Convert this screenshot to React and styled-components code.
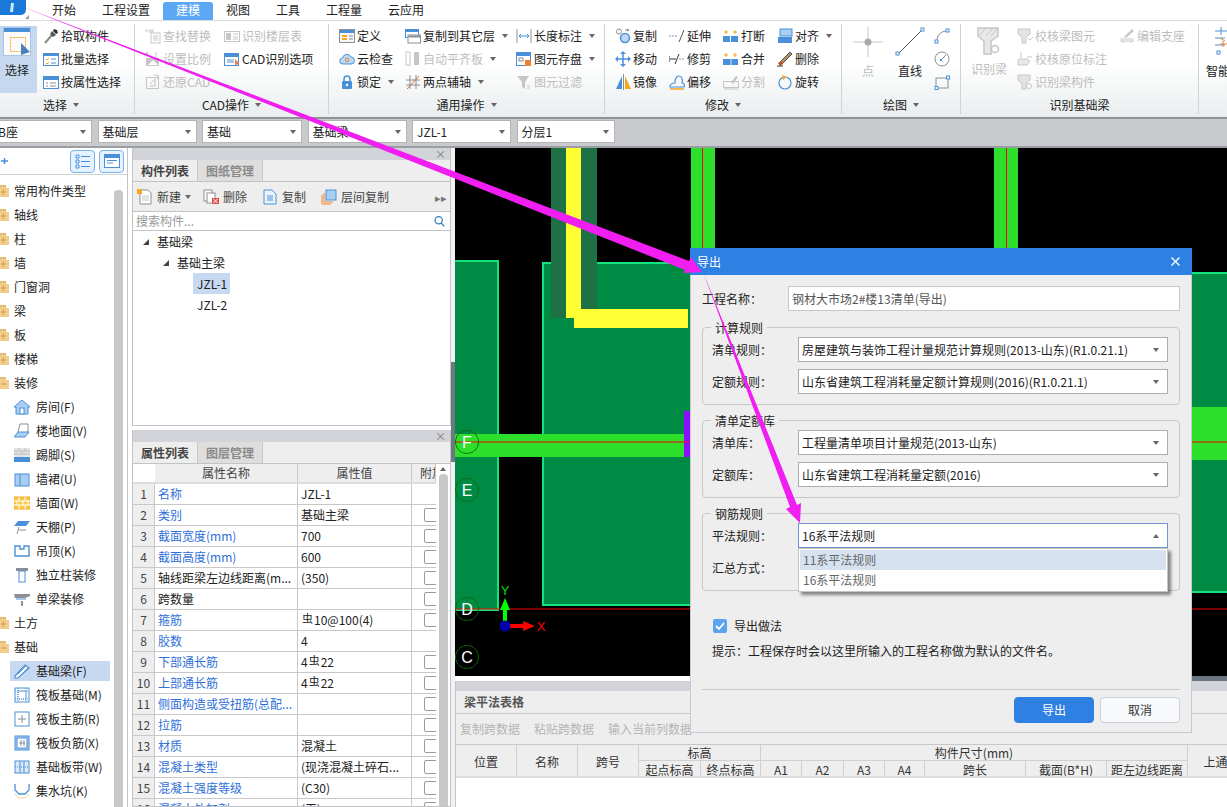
import React from "react";
import styled, { createGlobalStyle } from "styled-components";

const GlobalStyle = createGlobalStyle`
  html, body { margin: 0; padding: 0; background: #fff; }
  * { box-sizing: border-box; }
`;

const B = "#4a90d9";
const L = "#a9cdf3";
const O = "#f5a623";
const G = "#c6c6c6";
const D = "#8a8f96";

// all small drawings, 16 unit box
const glyphs = {
  pick: <><path d="M2 15l7-8" stroke="#8a8a8a" strokeWidth="2" /><path d="M9 3l4 4-3 2-3-3z" fill="#555" /><path d="M11 1l3 1 1 3-2 1-3-3z" fill="#333" /></>,
  batch: <><rect x=".5" y="2.5" width="15" height="12" fill="#fff" stroke={B} /><rect x="1" y="3" width="14" height="2" fill={B} /><path d="M3 8l1 1 2-2M3 12l1 1 2-2" stroke={O} fill="none" /><path d="M8 8h5M8 12h5" stroke={B} /></>,
  attrs: <><rect x=".5" y="2.5" width="15" height="12" fill="#fff" stroke={B} /><rect x="1" y="3" width="14" height="3" fill={B} /><path d="M3 9h2M3 12h2M7 9h6M7 12h6" stroke={D} /></>,
  find: <><path d="M1 2h8M1 2v3" stroke={G} strokeDasharray="2 1" fill="none" /><rect x="6" y="5" width="9" height="10" fill="none" stroke={G} /><path d="M8 8h5M8 10h5M8 12h5" stroke={G} /><path d="M3 4h5l-2-2" stroke={G} fill="none" /></>,
  scale: <><rect x="1" y="7" width="13" height="8" fill={G} /><path d="M2 4V1M2 1l-1 2M2 1l1 2M11 6V1" stroke={G} fill="none" /><path d="M3 14l5-5 5 5" fill="#fff" /></>,
  restore: <><rect x="1.5" y="3.5" width="12" height="11" fill="none" stroke={G} /><path d="M5 10l5-5v7H5" fill="none" stroke={G} /><path d="M9 1l5 1-2 3" stroke={G} fill="none" /></>,
  table: <><rect x=".5" y="3.5" width="15" height="10" fill="#fff" stroke={G} /><rect x="2" y="5" width="5" height="7" fill={G} /><path d="M9 6h5M9 9h5M9 11h5" stroke={G} /></>,
  cadOpt: <><rect x=".5" y="2.5" width="14" height="12" fill="#fff" stroke={B} /><rect x="1" y="3" width="13" height="3" fill={B} /><path d="M3 11h7M3 9h7" stroke={B} /><path d="M11 8l4 4-4 3z" fill="#f08040" /></>,
  define: <><rect x=".5" y="1.5" width="15" height="13" fill="#f7f7f7" stroke={D} /><rect x="1" y="2" width="14" height="3" fill={B} /><rect x="3" y="7" width="5" height="2" fill={O} /><rect x="3" y="10" width="5" height="2" fill={O} /><path d="M10 8h4M10 11h4" stroke={D} /></>,
  cloud: <><path d="M4 13a3 3 0 0 1-.5-6A4.500 4.500 0 0 1 12 6a3.500 3.500 0 0 1 0 7z" fill="#bcd8f5" stroke={B} /><circle cx="8" cy="9" r="1.800" fill="none" stroke="#e08040" /></>,
  lock: <><rect x="3" y="7" width="10" height="8" rx="1" fill={B} /><path d="M5 7V5a3 3 0 0 1 6 0v2" fill="none" stroke={B} strokeWidth="1.500" /><circle cx="8" cy="11" r="1.200" fill="#fff" /></>,
  copyLayer: <><rect x=".5" y="1.5" width="13" height="8" fill="#fff" stroke={B} /><rect x="1" y="2" width="12" height="2" fill={B} /><rect x="3" y="7" width="12.500" height="8" fill="#fff" stroke={D} /><rect x="3.500" y="7.500" width="12" height="2" fill={D} /></>,
  align0: <><rect x="1" y="1" width="4" height="13" fill="none" stroke={G} /><rect x="9" y="1" width="5" height="13" fill={G} /></>,
  twoPt: <><path d="M1 6h14M1 11h14M5 1v14M11 1v14" stroke={D} /><path d="M2 15L14 2" stroke="#e07030" /></>,
  dim: <><path d="M1 1v14M15 1v14" stroke={D} /><path d="M3 8h10M3 8l2-2M3 8l2 2M13 8l-2-2M13 8l-2 2" stroke={B} fill="none" /></>,
  save: <><rect x=".5" y="1.5" width="14" height="13" fill="#fff" stroke={B} /><rect x="1" y="2" width="13" height="3" fill={B} /><rect x="3" y="7" width="4" height="3" fill="none" stroke={D} /><rect x="9" y="9" width="6" height="6" fill="#f08030" /></>,
  filter: <><path d="M1 2h12L9 8v7l-3-2V8z" fill={G} /><path d="M11 12h3M11 14h3" stroke={G} /></>,
  copy: <><circle cx="4" cy="3.500" r="2.500" fill="none" stroke={D} /><circle cx="10" cy="10" r="4.500" fill="#bcd8f5" stroke={B} strokeWidth="1.500" /><path d="M10 2h4M12 1l2 1-2 1" stroke={D} fill="none" /></>,
  move: <><path d="M8 1v14M1 8h14" stroke={B} strokeWidth="1.500" /><path d="M8 0l3 3H5zM8 16l3-3H5zM0 8l3-3v6zM16 8l-3-3v6z" fill={B} /></>,
  mirror: <><path d="M7 2v13H1z" fill={B} /><path d="M10 2v13h6z" fill={O} /><path d="M8.500 0v16" stroke={D} /></>,
  extend: <><path d="M0 8h8" stroke={D} strokeDasharray="2 1" /><path d="M10 14l5-12" stroke="#555" /></>,
  trim: <><path d="M0 5v6" stroke="#333" /><path d="M1 8h6" stroke="#333" /><path d="M6 13l4-10" stroke="#333" /><path d="M10 8h6" stroke={D} strokeDasharray="2 1" /></>,
  offset: <><path d="M1 13c0-4 4-4 5-4 0-3 1-7 4-7s4 4 3 7c2 0 3 2 2 4z" fill="none" stroke={B} strokeWidth="1.200" /><path d="M1 15h14" stroke={O} strokeWidth="1.500" /></>,
  brk: <><rect x="0" y="8" width="7" height="6" fill={B} /><rect x="8" y="8" width="7" height="6" fill={B} /><path d="M1 4h4M3 2v4M10 4h4M12 2v4" stroke={O} /></>,
  merge: <><rect x="0" y="8" width="15" height="6" fill={B} /><path d="M8 8v6" stroke="#cfe3f8" /><path d="M1 4h4M3 2v4M10 4h4M12 2v4" stroke={O} /></>,
  split: <><rect x=".5" y="7.500" width="15" height="6" fill="none" stroke={G} /><path d="M8 8l5-6 2 1-5 7z" fill={G} /><path d="M1 15h14" stroke={G} /></>,
  alignR: <><rect x="3" y="1" width="12" height="7" fill={L} stroke={B} /><rect x="1" y="9" width="14" height="6" fill={B} /></>,
  del: <><path d="M3 11L13 1l2 2L5 13z" fill="#b09060" stroke="#555" /><path d="M1 12l3-2 2 3-3 2z" fill="#c0501a" /><path d="M0 15h6" stroke="#333" /></>,
  rotate: <><circle cx="8" cy="9" r="6" fill="none" stroke={B} strokeWidth="1.200" /><path d="M5 1l5 2-4 3z" fill={O} /></>,
  arc: <><path d="M3 13C3 7 7 3 13 3" stroke={D} fill="none" /><rect x="1" y="12" width="3" height="3" fill="#fff" stroke={B} /><rect x="12" y="1" width="3" height="3" fill="#fff" stroke={B} /></>,
  circle: <><circle cx="8" cy="8" r="7" fill="none" stroke={D} /><path d="M7 9l5-5" stroke={B} /><rect x="6" y="8" width="2" height="2" fill={B} /></>,
  rect: <><rect x="2" y="4" width="12" height="10" fill="none" stroke={D} /><rect x="1" y="12.500" width="3" height="3" fill="#fff" stroke={B} /><rect x="12.500" y="2" width="3" height="3" fill="#fff" stroke={B} /></>,
  checkBeam: <><path d="M1 1h12v5l-4 3v6H5V9L1 6z" fill="#e4e4e4" stroke={G} /><path d="M11 10l2 2 3-3" stroke={G} fill="none" /></>,
  checkPos: <><path d="M4 1v6M2 8h8l3 2-3 4H1V9z" fill="#e8e8e8" stroke={G} /><path d="M10 6h5" stroke={G} /></>,
  recog: <><path d="M1 1h12v5l-4 3v6H5V9L1 6z" fill="#e4e4e4" stroke={G} /><circle cx="12" cy="12" r="2.500" fill="#fff" stroke={G} /></>,
  support: <><path d="M5 9L13 1l2 2-8 7z" fill={G} /><path d="M1 11h14M1 13h14M4 13v2M12 13v2" stroke={G} /></>,
  folder: <><path d="M-3 3h9v2h3v9H-3z" fill="#f1cd8b" /><path d="M-3 2h9v2h-9z" fill="#e3ba75" /><path d="M1 9h5M3.500 6.500v5" stroke="#d19a3f" /></>,
  folderOpen: <><path d="M-3 3h9v2h3v9H-3z" fill="#f1cd8b" /><path d="M-3 2h9v2h-9z" fill="#e3ba75" /><path d="M1 9h5" stroke="#d19a3f" /></>,
  room: <><path d="M0 8l8-7 8 7h-2v7H2V8z" fill={L} stroke={B} /><rect x="6" y="9" width="4" height="6" fill="#fff" stroke={B} /></>,
  floor: <><path d="M6 1h8M6 1L4 9" stroke={D} fill="none" /><path d="M14 1v8" stroke={D} /><path d="M4 9h11l-4 5H0z" fill={L} stroke={B} /></>,
  skirt: <><rect x="0" y="1" width="16" height="9" fill="#e4e4e4" /><path d="M0 4h16M0 7h16M5 1v3M11 1v3M8 4v3" stroke="#bbb" /><rect x="0" y="10" width="16" height="5" fill={B} /></>,
  dado: <><rect x="1" y="3" width="14" height="12" fill={L} stroke={B} /><path d="M6 3v12" stroke={B} /></>,
  wall: <><rect x="0" y="2" width="16" height="12" fill="#fbc94a" stroke={O} /><path d="M0 6h16M0 10h16M5 2v4M11 2v4M3 6v4M9 6v4M14 6v4M5 10v4M11 10v4" stroke="#fff" /></>,
  ceiling: <><path d="M4 2h12l-4 5H0z" fill={B} /><path d="M5 8L3 15M5 11h7" stroke={D} fill="none" /></>,
  drop: <><path d="M1 3h5v3h4V3h5v10H1z" fill="#fff" stroke={B} strokeWidth="1.400" /></>,
  colDeco: <><rect x="2" y="1" width="12" height="3" fill={D} /><rect x="5" y="4" width="6" height="11" fill="#fff" stroke={B} /></>,
  beamDeco: <><path d="M0 3h16v2l-5 2H1z" fill={D} /><path d="M2 8h10" stroke={B} /><path d="M8 10v5" stroke={D} strokeWidth="2" /></>,
  pencil: <><path d="M1 13L11 2l4 3L4 15H1z" fill="#fff" stroke={B} strokeWidth="1.200" /><path d="M4 11l8-8M6 13l8-8" stroke={B} /></>,
  raft: <><rect x="1" y="1" width="14" height="14" fill="#fff" stroke={B} /><rect x="4" y="4" width="8" height="8" fill="#fff" stroke={B} strokeDasharray="1 1" /><path d="M1 4h14M1 12h14M4 1v14M12 1v14" stroke={B} strokeDasharray="1 1" /></>,
  raftM: <><rect x="1" y="1" width="14" height="14" fill="#fff" stroke={B} /><path d="M4 8h8M8 4v8" stroke={D} /></>,
  raftN: <><rect x="1" y="1" width="14" height="14" fill={L} stroke={B} /><rect x="3" y="3" width="10" height="10" fill="#fff" stroke={B} /><path d="M5 8h6M7 5v6M10 5v6" stroke={D} /></>,
  band: <><rect x="1" y="2" width="14" height="12" fill="#dce9f7" stroke={B} /><path d="M6 2v12M10 2v12" stroke={B} /><path d="M1 8h14" stroke={B} strokeDasharray="1 1" /></>,
  pit: <><path d="M1 1v6l4 4h6l4-4V1" fill="none" stroke={B} strokeWidth="1.300" /><path d="M1 11l4 4h6l4-4" fill="none" stroke={O} strokeDasharray="1 1" /></>,
  newDoc: <><path d="M3 1h8l3 3v11H3z" fill="#fff" stroke={D} /><path d="M5 7h7M5 9h7M5 11h7" stroke={G} /><rect x="0" y="0" width="5" height="5" fill={O} /></>,
  delDoc: <><rect x="1" y="1" width="8" height="11" fill="#fff" stroke={D} /><rect x="4" y="4" width="8" height="10" fill="#fff" stroke={D} /><rect x="9" y="9" width="7" height="6" fill="#e0504a" /><path d="M10.500 10l4 4M14.500 10l-4 4" stroke="#fff" /></>,
  copyDoc: <><path d="M2 1h8l4 4v10H2z" fill="#eaf3fc" stroke={B} /><path d="M5 7h6M5 9h6M5 11h6" stroke={B} /></>,
  layerCopy: <><rect x="5" y="1" width="10" height="10" fill={L} stroke={B} /><path d="M3 4v9h9" fill="none" stroke="#f08030" /><path d="M1 6v9h9" fill="none" stroke="#f08030" /></>,
  search: <><circle cx="7" cy="6.500" r="4.500" fill="none" stroke="#2b80c0" strokeWidth="1.500" /><path d="M10 10l4 4" stroke="#2b80c0" strokeWidth="1.700" /></>,
  list: <><path d="M1 2h3v3H1zM1 7h3v3H1zM1 12h3v3H1z" fill="none" stroke={B} /><path d="M6 3.500h9M6 8.500h9M6 13.500h9" stroke={B} /></>,
  win: <><rect x=".5" y="1.500" width="15" height="13" fill="#fff" stroke={B} /><rect x="1" y="2" width="14" height="3" fill={B} /><path d="M3 7.500h10M3 10h6" stroke={B} /></>,
};

const SvgBox = styled.svg`
  display: block;
  flex-shrink: 0;
  overflow: hidden;
`;

const Icon = ({ name, size = 16 }) => (
  <SvgBox width={size} height={size} viewBox="0 0 16 16">{glyphs[name]}</SvgBox>
);

const Page = styled.div`
  position: relative;
  width: 1227px;
  height: 807px;
  overflow: hidden;
  display: flex;
  flex-direction: column;
  background: #fff;
  color: #222;
  font-family: "Noto Sans CJK SC", "Liberation Sans", sans-serif;
  font-size: 12px;
  line-height: 16px;
`;

const MenuBar = styled.div`
  height: 21px;
  flex-shrink: 0;
  display: flex;
  align-items: flex-end;
  border-bottom: 1px solid #dcdcdc;
`;

const Logo = styled.div`
  width: 39px;
  height: 20px;
  align-self: flex-start;
`;

const MenuTab = styled.div`
  height: 18px;
  padding: 0 13px;
  border-radius: 3px 3px 0 0;
  background: ${(p) => (p.$active ? "#5ca8f5" : "transparent")};
  color: ${(p) => (p.$active ? "#fff" : "#222")};
`;

const Ribbon = styled.div`
  height: 98px;
  flex-shrink: 0;
  display: flex;
  padding-top: 3px;
  background: linear-gradient(#fff 45%, #e9edee);
  border-bottom: 2px solid #8f9295;
`;

const RibbonGroup = styled.div`
  width: ${(p) => p.$w}px;
  flex-shrink: 0;
  height: 90px;
  display: flex;
  flex-direction: column;
  border-right: ${(p) => (p.$last ? "none" : "1px solid #cfd3d5")};
`;

const GroupBody = styled.div`
  height: 72px;
  display: flex;
  padding-left: ${(p) => p.$pad || 0}px;
`;

const GroupLabel = styled.div`
  flex: 1;
  display: flex;
  align-items: center;
  justify-content: center;
  gap: 6px;
  padding-right: ${(p) => p.$shift || 0}px;
`;

const Caret = styled.span`
  display: inline-block;
  flex-shrink: 0;
  width: 0;
  height: 0;
  border-left: 3.5px solid transparent;
  border-right: 3.5px solid transparent;
  ${(p) => (p.$up ? "border-bottom: 4px solid #666;" : "border-top: 4px solid #666;")}
`;

const ToolCol = styled.div`
  width: ${(p) => p.$w}px;
  flex-shrink: 0;
  display: flex;
  flex-direction: column;
`;

const ToolRow = styled.div`
  height: 23px;
  display: flex;
  align-items: center;
  gap: 2px;
  white-space: nowrap;
  color: ${(p) => (p.$off ? "#bdbdbd" : "#222")};
`;

const RowCaret = styled(Caret)`
  margin-left: 5px;
`;

const BigTool = styled.div`
  width: ${(p) => p.$w}px;
  height: 67px;
  margin-top: 2px;
  margin-right: ${(p) => p.$gap || 0}px;
  flex-shrink: 0;
  display: flex;
  flex-direction: column;
  align-items: center;
  gap: 6px;
  padding: 1px ${(p) => p.$nudge || 0}px 0 0;
  white-space: nowrap;
  background: ${(p) => (p.$on ? "#c5d8ef" : "transparent")};
  color: ${(p) => (p.$off ? "#bdbdbd" : "#222")};
`;

const SelectorBar = styled.div`
  height: 29px;
  flex-shrink: 0;
  display: flex;
  align-items: center;
  gap: 5.500px;
  padding-bottom: 2px;
  background: #c8cace;
  border-bottom: 2px solid #9a9da1;
`;

const SmallSelect = styled.div`
  width: ${(p) => p.$w}px;
  height: 23px;
  flex-shrink: 0;
  display: flex;
  align-items: center;
  justify-content: space-between;
  padding: 0 5px 0 ${(p) => (p.$cut ? 0 : 4)}px;
  margin-left: ${(p) => (p.$cut ? -3 : 0)}px;
  background: #fff;
  border: 1px solid #b4b4b4;
  overflow: hidden;
  white-space: nowrap;
`;

const Main = styled.div`
  flex: 1;
  min-height: 0;
  display: flex;
`;

const LeftNav = styled.div`
  width: 128px;
  flex-shrink: 0;
  display: flex;
  flex-direction: column;
  border-right: 1px solid #c4c4c4;
`;

const NavTop = styled.div`
  height: 27px;
  flex-shrink: 0;
  display: flex;
  align-items: center;
  justify-content: space-between;
  padding-right: 3px;
  border-bottom: 1px solid #d0d0d0;
`;

const NavToggles = styled.div`
  display: flex;
  gap: 4px;
`;

const ToggleBtn = styled.div`
  width: 25px;
  height: 23px;
  display: flex;
  align-items: center;
  justify-content: center;
  background: #e6f2fe;
  border: 1px solid #74b2f2;
  border-radius: 4px;
`;

const NavBody = styled.div`
  flex: 1;
  min-height: 0;
  display: flex;
`;

const NavTree = styled.div`
  width: 114px;
  flex-shrink: 0;
  padding-top: 4px;
  display: flex;
  flex-direction: column;
`;

const NavScroll = styled.div`
  width: 9px;
  margin-top: 15px;
  background: #c8c8c8;
  border-radius: 4px 4px 0 0;
`;

const NavRow = styled.div`
  height: 24px;
  flex-shrink: 0;
  display: flex;
  align-items: center;
  gap: 4px;
  white-space: nowrap;
`;

const NavChild = styled.div`
  width: 100px;
  height: 20px;
  flex-shrink: 0;
  margin: 2px 0 2px 10px;
  padding-left: 4px;
  display: flex;
  align-items: center;
  gap: 6px;
  white-space: nowrap;
  background: ${(p) => (p.$on ? "#c7d9f0" : "transparent")};
`;

const MidCol = styled.div`
  width: 323px;
  flex-shrink: 0;
  margin-left: 4px;
  display: flex;
  flex-direction: column;
  gap: 4px;
  border-right: 4px solid #f2f2f2;
`;

const Panel = styled.div`
  height: ${(p) => (p.$h ? `${p.$h}px` : "auto")};
  flex: ${(p) => (p.$h ? "none" : "1")};
  min-height: 0;
  display: flex;
  flex-direction: column;
  overflow: hidden;
  border: 1px solid #c0c3c7;
  border-top: none;
`;

const PanelStrip = styled.div`
  height: 12px;
  flex-shrink: 0;
  display: flex;
  align-items: center;
  justify-content: flex-end;
  padding-right: 4px;
  background: #d2d4d9;
  color: #777;
  font-size: 11px;
  line-height: 12px;
`;

const BottomStrip = styled(PanelStrip)`
  height: 10px;
`;

const TabRow = styled.div`
  height: 22px;
  flex-shrink: 0;
  display: flex;
  background: #eee;
  border-bottom: 1px solid #c0c3c7;
`;

const PanelTab = styled.div`
  width: 65px;
  display: flex;
  align-items: center;
  justify-content: center;
  font-weight: 700;
  background: ${(p) => (p.$active ? "#eee" : "#dedede")};
  color: ${(p) => (p.$active ? "#444" : "#8a8a8a")};
  border-right: 1px solid #c8c8c8;
`;

const ListBar = styled.div`
  height: 30px;
  flex-shrink: 0;
  display: flex;
  align-items: center;
  padding-left: 4px;
  background: #eee;
  border-bottom: 1px solid #c0c3c7;
  color: #444;
`;

const ListTool = styled.div`
  display: flex;
  align-items: center;
  gap: 4px;
  margin-right: ${(p) => p.$gap}px;
`;

const ListMore = styled.div`
  margin-left: auto;
  padding-right: 3px;
  color: #777;
  font-size: 11px;
`;

const SearchBox = styled.div`
  height: 19px;
  flex-shrink: 0;
  display: flex;
  align-items: center;
  justify-content: space-between;
  padding: 0 4px 0 3px;
  color: #999;
  border-bottom: 1px solid #c0c3c7;
`;

const TreeWrap = styled.div`
  padding-top: 0;
`;

const TreeRow = styled.div`
  height: 21px;
  display: flex;
  align-items: center;
  gap: 8px;
  padding-left: ${(p) => p.$indent}px;
`;

const TreeMark = styled.span`
  width: 0;
  height: 0;
  border-left: 6px solid transparent;
  border-bottom: 6px solid #444;
`;

const TreeLeaf = styled.div`
  width: 37px;
  height: 21px;
  margin-left: 60px;
  padding-left: 4px;
  display: flex;
  align-items: center;
  background: ${(p) => (p.$on ? "#c7d9f0" : "transparent")};
`;

const PropWrap = styled.div`
  flex: 1;
  min-height: 0;
  display: flex;
`;

const PropTable = styled.div`
  width: 303px;
  flex-shrink: 0;
  overflow: hidden;
`;

const PropRow = styled.div`
  height: 21px;
  display: grid;
  grid-template-columns: 22px 143px 114px 24px;
  border-bottom: 1px solid #c8c8c8;
`;

const PropHead = styled(PropRow)`
  height: 20px;
  color: #444;
  border-bottom: 2px solid #ddd;
`;

const HeadCell = styled.div`
  display: flex;
  align-items: center;
  justify-content: ${(p) => (p.$clip ? "flex-start" : "center")};
  padding-left: ${(p) => (p.$clip ? 8 : 0)}px;
  background: ${(p) => (p.$blank ? "#fff" : "#eee")};
  border-right: ${(p) => (p.$blank ? "none" : "1px solid #c8c8c8")};
  white-space: nowrap;
  overflow: hidden;
`;

const IndexCell = styled.div`
  display: flex;
  align-items: center;
  justify-content: center;
  background: #eee;
  color: #444;
  border-right: 1px solid #c8c8c8;
`;

const PropCell = styled.div`
  display: flex;
  align-items: center;
  padding-left: 3px;
  white-space: nowrap;
  overflow: hidden;
  color: ${(p) => (p.$link ? "#2f6fd8" : "#222")};
  border-right: 1px solid #c8c8c8;
`;

const CheckCell = styled.div`
  display: flex;
  align-items: center;
  padding-left: 12px;
  overflow: hidden;
`;

const TinyCheck = styled.span`
  width: 14px;
  height: 14px;
  flex-shrink: 0;
  border: 1px solid #9a9a9a;
  border-radius: 2px;
  background: #fff;
`;

const RebarMark = styled.span`
  font-size: 11px;
  margin: -5px 1px 0;
`;

const PropScroll = styled.div`
  width: 10px;
  margin-left: 2px;
  display: flex;
  flex-direction: column;
  align-items: center;
  gap: 3px;
  padding-top: 3px;
`;

const ScrollThumb = styled.div`
  flex: 1;
  width: 9px;
  background: #c8c8c8;
  border-radius: 4px 4px 0 0;
`;

const RightCol = styled.div`
  flex: 1;
  min-width: 0;
  display: flex;
  flex-direction: column;
`;

const Grip = styled.div`
  position: absolute;
  left: 451px;
  top: 362px;
  width: 4px;
  height: 100px;
  background: #6f7781;
`;

const Canvas = styled.svg`
  display: block;
  width: 772px;
  height: 528px;
  flex-shrink: 0;
  background: #000;
`;

const HSplit = styled.div`
  height: 5px;
  flex-shrink: 0;
  background: linear-gradient(to right, #fff 60%, #6a7580 60%);
`;

const BottomPanel = styled.div`
  flex: 1;
  min-height: 0;
  display: flex;
  flex-direction: column;
  border-left: 1px solid #c0c3c7;
  overflow: hidden;
`;

const BottomTab = styled.div`
  height: 23px;
  flex-shrink: 0;
  display: flex;
  align-items: center;
  padding-left: 8px;
  background: #eee;
  color: #555;
  font-weight: 700;
  border-bottom: 1px solid #c8c8c8;
`;

const BottomBar = styled.div`
  height: 31px;
  flex-shrink: 0;
  display: flex;
  align-items: center;
  gap: 14px;
  padding-left: 4px;
  background: #eee;
  color: #b5b5b5;
  border-bottom: 1px solid #c8c8c8;
  white-space: nowrap;
`;

const SpanGrid = styled.div`
  display: grid;
  height: 33px;
  flex-shrink: 0;
  grid-template-columns: 61px 61px 61px 62px 60px 41px 42px 41px 40px 101px 81px 81px 80px;
  grid-template-rows: 16px 17px;
  background: #eee;
  border-bottom: 2px solid #ddd;
  color: #333;
  overflow: hidden;
`;

const SpanCell = styled.div`
  grid-column: ${(p) => p.$col || "auto"};
  grid-row: ${(p) => p.$row || "auto"};
  display: flex;
  align-items: center;
  justify-content: center;
  white-space: nowrap;
  border-right: 1px solid #d0d0d0;
  border-bottom: ${(p) => (p.$under ? "1px solid #d0d0d0" : "none")};
`;

const Dialog = styled.div`
  position: absolute;
  left: 690px;
  top: 248px;
  width: 502px;
  height: 485px;
  background: #eee;
  border: 1px solid #c4cad6;
  border-top: none;
`;

const DialogTitle = styled.div`
  height: 27px;
  margin: 0 -1px;
  padding: 0 12px 0 7px;
  display: flex;
  align-items: center;
  justify-content: space-between;
  background: #2f80e3;
  color: #fff;
`;

const DialogBody = styled.div`
  padding: 11px 11px 0 11px;
  display: flex;
  flex-direction: column;
`;

const NameRow = styled.div`
  display: flex;
  align-items: center;
  margin-bottom: 16px;
`;

const NameLabel = styled.div`
  width: 86px;
`;

const NameInput = styled.div`
  flex: 1;
  height: 25px;
  display: flex;
  align-items: center;
  padding-left: 3px;
  background: #fff;
  border: 1px solid #c8c8c8;
  color: #555;
`;

const RuleGroup = styled.div`
  position: relative;
  height: ${(p) => p.$h}px;
  margin-bottom: 15px;
  padding: 9px 11px 0 9px;
  display: flex;
  flex-direction: column;
  gap: 7px;
  border: 1px solid #c8c8c8;
  border-radius: 4px;
`;

const Legend = styled.div`
  position: absolute;
  left: 8px;
  top: -8px;
  padding: 0 4px;
  background: #eee;
`;

const FieldRow = styled.div`
  display: flex;
  align-items: center;
`;

const FieldLabel = styled.div`
  width: 86px;
  flex-shrink: 0;
`;

const SelectBox = styled.div`
  position: relative;
  flex: 1;
  height: 25px;
  display: flex;
  align-items: center;
  justify-content: space-between;
  padding: 0 8px 0 3px;
  background: #fff;
  border: 1px solid ${(p) => (p.$open ? "#6f94d0" : "#adadad")};
  white-space: nowrap;
`;

const DropList = styled.div`
  position: absolute;
  z-index: 2;
  left: -1px;
  right: -1px;
  top: 24px;
  height: 44px;
  padding: 1px;
  background: #fff;
  border: 1px solid #c4c4c4;
  box-shadow: 3px 3px 3px rgba(0, 0, 0, 0.45);
`;

const DropItem = styled.div`
  height: 20px;
  padding-left: 3px;
  display: flex;
  align-items: center;
  color: #666;
  background: ${(p) => (p.$on ? "#d7e2f1" : "#fff")};
`;

const CheckRow = styled.div`
  display: flex;
  align-items: center;
  gap: 7px;
  margin: 12px 0 0 11px;
`;

const BlueCheck = styled.div`
  width: 14px;
  height: 14px;
  display: flex;
  align-items: center;
  justify-content: center;
  background: #5aa5f0;
  border-radius: 2px;
`;

const Hint = styled.div`
  margin: 9px 0 0 10px;
`;

const Rule = styled.div`
  height: 1px;
  margin-top: 30px;
  background: #c6cad2;
`;

const ButtonRow = styled.div`
  display: flex;
  justify-content: flex-end;
  gap: 6px;
  margin-top: 7px;
`;

const DialogButton = styled.div`
  width: 80px;
  height: 26px;
  display: flex;
  align-items: center;
  justify-content: center;
  border-radius: 4px;
  background: ${(p) => (p.$primary ? "#2f80e3" : "#f8f9fb")};
  color: ${(p) => (p.$primary ? "#fff" : "#333")};
  border: 1px solid ${(p) => (p.$primary ? "#2f80e3" : "#ccd2dc")};
`;

const ArrowLayer = styled.svg`
  position: absolute;
  left: 0;
  top: 0;
  z-index: 3;
  pointer-events: none;
`;

const menus = ["开始", "工程设置", "建模", "视图", "工具", "工程量", "云应用"];

const Tool = ({ icon, label, off, caret }) => (
  <ToolRow $off={off}>
    <Icon name={icon} />
    {label}
    {caret && <RowCaret />}
  </ToolRow>
);

const Column = ({ w, items }) => (
  <ToolCol $w={w}>
    {items.map((t) => <Tool key={t.label} {...t} />)}
  </ToolCol>
);

const SelectIcon = () => (
  <SvgBox width="28" height="29" viewBox="0 0 28 29">
    <rect x=".5" y=".5" width="27" height="28" fill="#fbfbfb" stroke="#a9c4e4" />
    <rect x="1" y="1" width="26" height="4" fill={B} />
    <rect x="7.500" y="10.500" width="15" height="14" fill="none" stroke={O} strokeDasharray="2 1" />
    <path d="M18 16l9 9-9 3z" fill="#4a80bd" />
  </SvgBox>
);

const PointIcon = () => (
  <SvgBox width="30" height="30" viewBox="0 0 30 30">
    <path d="M0 15h30M15 0v30" stroke={G} />
    <circle cx="15" cy="15" r="3.500" fill="#aaa" />
  </SvgBox>
);

const LineIcon = () => (
  <SvgBox width="30" height="30" viewBox="0 0 30 30">
    <path d="M3 27L27 3" stroke="#555" />
    <rect x="1" y="25" width="3" height="3" fill="#fff" stroke={B} />
    <rect x="26" y="1" width="3" height="3" fill="#fff" stroke={B} />
  </SvgBox>
);

const RecogIcon = () => (
  <SvgBox width="24" height="28" viewBox="0 0 24 28">
    <path d="M1 1h20v8l-7 5v13H7V14L1 9z" fill="#e8e8e8" stroke={G} strokeWidth="1.500" />
    <path d="M3 8l6-7M9 9l7-8M14 9l6-7" stroke={G} />
    <circle cx="18" cy="22" r="3.500" fill="#fff" stroke={G} strokeWidth="1.500" />
  </SvgBox>
);

const SmartIcon = () => (
  <SvgBox width="18" height="30" viewBox="-6 0 18 30">
    <path d="M0 4h12M6 0v8" stroke={B} />
    <path d="M0 11h10M0 18h10" stroke={B} />
    <path d="M5 11l5 3M5 17h7M8 14v6" stroke="#f08030" />
    <rect x="2" y="24" width="3" height="3" fill="#fff" stroke={B} />
  </SvgBox>
);

const RibbonArea = () => (
  <Ribbon>
    <RibbonGroup $w={135}>
      <GroupBody>
        <BigTool $w={37} $on $gap={6} $nudge={3}><SelectIcon />选择</BigTool>
        <Column w={90} items={[
          { icon: "pick", label: "拾取构件" },
          { icon: "batch", label: "批量选择" },
          { icon: "attrs", label: "按属性选择" },
        ]} />
      </GroupBody>
      <GroupLabel $shift={12}>选择<Caret /></GroupLabel>
    </RibbonGroup>
    <RibbonGroup $w={194}>
      <GroupBody $pad={10}>
        <Column w={79} items={[
          { icon: "find", label: "查找替换", off: true },
          { icon: "scale", label: "设置比例", off: true },
          { icon: "restore", label: "还原CAD", off: true },
        ]} />
        <Column w={95} items={[
          { icon: "table", label: "识别楼层表", off: true },
          { icon: "cadOpt", label: "CAD识别选项" },
        ]} />
      </GroupBody>
      <GroupLabel>CAD操作<Caret /></GroupLabel>
    </RibbonGroup>
    <RibbonGroup $w={276}>
      <GroupBody $pad={10}>
        <Column w={66} items={[
          { icon: "define", label: "定义" },
          { icon: "cloud", label: "云检查" },
          { icon: "lock", label: "锁定", caret: true },
        ]} />
        <Column w={111} items={[
          { icon: "copyLayer", label: "复制到其它层", caret: true },
          { icon: "align0", label: "自动平齐板", off: true, caret: true },
          { icon: "twoPt", label: "两点辅轴", caret: true },
        ]} />
        <Column w={80} items={[
          { icon: "dim", label: "长度标注", caret: true },
          { icon: "save", label: "图元存盘", caret: true },
          { icon: "filter", label: "图元过滤", off: true },
        ]} />
      </GroupBody>
      <GroupLabel>通用操作<Caret /></GroupLabel>
    </RibbonGroup>
    <RibbonGroup $w={237}>
      <GroupBody $pad={10}>
        <Column w={54} items={[
          { icon: "copy", label: "复制" },
          { icon: "move", label: "移动" },
          { icon: "mirror", label: "镜像" },
        ]} />
        <Column w={54} items={[
          { icon: "extend", label: "延伸" },
          { icon: "trim", label: "修剪" },
          { icon: "offset", label: "偏移" },
        ]} />
        <Column w={54} items={[
          { icon: "brk", label: "打断" },
          { icon: "merge", label: "合并" },
          { icon: "split", label: "分割", off: true },
        ]} />
        <Column w={54} items={[
          { icon: "alignR", label: "对齐", caret: true },
          { icon: "del", label: "删除" },
          { icon: "rotate", label: "旋转" },
        ]} />
      </GroupBody>
      <GroupLabel>修改<Caret /></GroupLabel>
    </RibbonGroup>
    <RibbonGroup $w={119}>
      <GroupBody $pad={11}>
        <BigTool $w={30} $gap={12} $off><PointIcon />点</BigTool>
        <BigTool $w={30} $gap={9}><LineIcon />直线</BigTool>
        <Column w={16} items={[
          { icon: "arc", label: "" },
          { icon: "circle", label: " " },
          { icon: "rect", label: "  " },
        ]} />
      </GroupBody>
      <GroupLabel>绘图<Caret /></GroupLabel>
    </RibbonGroup>
    <RibbonGroup $w={238}>
      <GroupBody $pad={10}>
        <BigTool $w={36} $gap={10} $off><RecogIcon />识别梁</BigTool>
        <Column w={102} items={[
          { icon: "checkBeam", label: "校核梁图元", off: true },
          { icon: "checkPos", label: "校核原位标注", off: true },
          { icon: "recog", label: "识别梁构件", off: true },
        ]} />
        <Column w={70} items={[{ icon: "support", label: "编辑支座", off: true }]} />
      </GroupBody>
      <GroupLabel>识别基础梁</GroupLabel>
    </RibbonGroup>
    <RibbonGroup $w={28} $last>
      <GroupBody $pad={7}>
        <BigTool $w={24}>
          <SmartIcon />
          智能
        </BigTool>
      </GroupBody>
    </RibbonGroup>
  </Ribbon>
);

const navItems = [
  { t: "常用构件类型", f: 1 }, { t: "轴线", f: 1 }, { t: "柱", f: 1 }, { t: "墙", f: 1 },
  { t: "门窗洞", f: 1 }, { t: "梁", f: 1 }, { t: "板", f: 1 }, { t: "楼梯", f: 1 },
  { t: "装修", f: 2 },
  { t: "房间(F)", i: "room" }, { t: "楼地面(V)", i: "floor" }, { t: "踢脚(S)", i: "skirt" },
  { t: "墙裙(U)", i: "dado" }, { t: "墙面(W)", i: "wall" }, { t: "天棚(P)", i: "ceiling" },
  { t: "吊顶(K)", i: "drop" }, { t: "独立柱装修", i: "colDeco" }, { t: "单梁装修", i: "beamDeco" },
  { t: "土方", f: 1 },
  { t: "基础", f: 2 },
  { t: "基础梁(F)", i: "pencil", on: true }, { t: "筏板基础(M)", i: "raft" }, { t: "筏板主筋(R)", i: "raftM" },
  { t: "筏板负筋(X)", i: "raftN" }, { t: "基础板带(W)", i: "band" }, { t: "集水坑(K)", i: "pit" },
];

const LeftPanel = () => (
  <LeftNav>
    <NavTop>
      <SvgBox width="9" height="10" viewBox="0 0 9 10">
        <path d="M1 5h7M4.500 2v6" stroke={B} strokeWidth="1.500" />
      </SvgBox>
      <NavToggles>
        <ToggleBtn><Icon name="list" /></ToggleBtn>
        <ToggleBtn><Icon name="win" /></ToggleBtn>
      </NavToggles>
    </NavTop>
    <NavBody>
      <NavTree>
        {navItems.map((n) => n.f ? (
          <NavRow key={n.t}>
            <SvgBox width="10" height="16" viewBox="0 0 10 16">{n.f === 1 ? glyphs.folder : glyphs.folderOpen}</SvgBox>
            {n.t}
          </NavRow>
        ) : (
          <NavChild key={n.t} $on={n.on}><Icon name={n.i} />{n.t}</NavChild>
        ))}
      </NavTree>
      <NavScroll />
    </NavBody>
  </LeftNav>
);

const Rebar = () => <RebarMark>虫</RebarMark>;

const props = [
  ["名称", "JZL-1", 1, 0],
  ["类别", "基础主梁", 1, 1],
  ["截面宽度(mm)", "700", 1, 1],
  ["截面高度(mm)", "600", 1, 1],
  ["轴线距梁左边线距离(m...", "(350)", 0, 1],
  ["跨数量", "", 0, 1],
  ["箍筋", <><Rebar />10@100(4)</>, 1, 1],
  ["胶数", "4", 1, 0],
  ["下部通长筋", <>4<Rebar />22</>, 1, 1],
  ["上部通长筋", <>4<Rebar />22</>, 1, 1],
  ["侧面构造或受扭筋(总配...", "", 1, 1],
  ["拉筋", "", 1, 1],
  ["材质", "混凝土", 1, 1],
  ["混凝土类型", "(现浇混凝土碎石...", 1, 1],
  ["混凝土强度等级", "(C30)", 1, 1],
  ["混凝土外加剂", "(无)", 1, 1],
];

const MiddlePanels = () => (
  <MidCol>
    <Panel $h={278}>
      <PanelStrip>×</PanelStrip>
      <TabRow>
        <PanelTab $active>构件列表</PanelTab>
        <PanelTab>图纸管理</PanelTab>
      </TabRow>
      <ListBar>
        <ListTool $gap={12}>
          <Icon name="newDoc" />
          新建 <Caret />
        </ListTool>
        <ListTool $gap={15}><Icon name="delDoc" />删除</ListTool>
        <ListTool $gap={15}><Icon name="copyDoc" />复制</ListTool>
        <ListTool $gap={0}><Icon name="layerCopy" />层间复制</ListTool>
        <ListMore>▸▸</ListMore>
      </ListBar>
      <SearchBox>搜索构件...<Icon name="search" size={13} /></SearchBox>
      <TreeWrap>
        <TreeRow $indent={10}><TreeMark />基础梁</TreeRow>
        <TreeRow $indent={30}><TreeMark />基础主梁</TreeRow>
        <TreeLeaf $on>JZL-1</TreeLeaf>
        <TreeLeaf>JZL-2</TreeLeaf>
      </TreeWrap>
    </Panel>
    <Panel>
      <PanelStrip>×</PanelStrip>
      <TabRow>
        <PanelTab $active>属性列表</PanelTab>
        <PanelTab>图层管理</PanelTab>
      </TabRow>
      <PropWrap>
        <PropTable>
          <PropHead>
            <HeadCell $blank />
            <HeadCell>属性名称</HeadCell>
            <HeadCell>属性值</HeadCell>
            <HeadCell $clip>附加</HeadCell>
          </PropHead>
          {props.map(([name, value, link, box], i) => (
            <PropRow key={name}>
              <IndexCell>{i + 1}</IndexCell>
              <PropCell $link={link}>{name}</PropCell>
              <PropCell>{value}</PropCell>
              <CheckCell>{box ? <TinyCheck /> : null}</CheckCell>
            </PropRow>
          ))}
        </PropTable>
        <PropScroll>
          <Caret $up />
          <ScrollThumb />
        </PropScroll>
      </PropWrap>
    </Panel>
  </MidCol>
);

const axes = [["F", 442], ["E", 490], ["D", 609], ["C", 657]];

const DrawingCanvas = () => (
  <Canvas viewBox="455 148 772 528">
    <rect x="454" y="261" width="44" height="349" fill="#008b45" stroke="#14e27a" strokeWidth="2" />
    <rect x="543" y="263" width="640" height="342" fill="#008b45" stroke="#14e27a" strokeWidth="2" />
    <rect x="1185" y="273" width="60" height="319" fill="#008b45" stroke="#14e27a" strokeWidth="2" />
    <rect x="551" y="148" width="15" height="170" fill="#1e7145" />
    <rect x="581" y="148" width="16" height="161" fill="#1e7145" />
    <rect x="566" y="148" width="15" height="170" fill="#ff3" />
    <rect x="574" y="309" width="114" height="19" fill="#ff3" />
    <rect x="691" y="148" width="24" height="114" fill="#2bdf2b" />
    <rect x="702" y="148" width="1" height="114" fill="#f00" />
    <rect x="994" y="148" width="24" height="100" fill="#2bdf2b" />
    <rect x="1006" y="148" width="1" height="100" fill="#f00" />
    <rect x="455" y="434" width="235" height="23" fill="#2bdf2b" />
    <rect x="1190" y="407" width="37" height="53" fill="#2bdf2b" />
    <rect x="684" y="411" width="6" height="46" fill="#8b0fff" />
    <path d="M455 442h772" stroke="#f00" strokeWidth="1" />
    <path d="M455 609h772" stroke="#f00" strokeWidth="1" />
    {axes.map(([letter, y]) => (
      <g key={letter}>
        <circle cx="467" cy={y} r="11.500" fill="none" stroke="#0a6b0a" strokeDasharray="5 .6" />
        <text x="467" y={y + 6} fill="#fff" fontSize="16" textAnchor="middle" fontFamily="Liberation Sans">{letter}</text>
      </g>
    ))}
    <path d="M505 626v-18" stroke="#0f0" strokeWidth="4" />
    <path d="M505 598l5 12h-10z" fill="#0f0" />
    <text x="505" y="595" fill="#1d1" fontSize="13" textAnchor="middle" fontFamily="Liberation Sans">Y</text>
    <path d="M505 626h22" stroke="#f00" strokeWidth="4" />
    <path d="M535 626l-12 5v-10z" fill="#f00" />
    <text x="541" y="631" fill="#f00" fontSize="13" textAnchor="middle" fontFamily="Liberation Sans">X</text>
    <circle cx="505" cy="626" r="5.500" fill="#00a" />
  </Canvas>
);

const BeamTable = () => (
  <BottomPanel>
    <BottomStrip />
    <BottomTab>梁平法表格</BottomTab>
    <BottomBar>
      <span>复制跨数据</span>
      <span>粘贴跨数据</span>
      <span>输入当前列数据</span>
    </BottomBar>
    <SpanGrid>
      <SpanCell $row="1 / 3">位置</SpanCell>
      <SpanCell $row="1 / 3">名称</SpanCell>
      <SpanCell $row="1 / 3">跨号</SpanCell>
      <SpanCell $col="4 / 6" $under>标高</SpanCell>
      <SpanCell $col="6 / 13" $under>构件尺寸(mm)</SpanCell>
      <SpanCell $col="13" $row="1 / 3">上通长筋</SpanCell>
      <SpanCell $col="4" $row="2">起点标高</SpanCell>
      <SpanCell $col="5" $row="2">终点标高</SpanCell>
      <SpanCell $col="6" $row="2">A1</SpanCell>
      <SpanCell $col="7" $row="2">A2</SpanCell>
      <SpanCell $col="8" $row="2">A3</SpanCell>
      <SpanCell $col="9" $row="2">A4</SpanCell>
      <SpanCell $col="10" $row="2">跨长</SpanCell>
      <SpanCell $col="11" $row="2">截面(B*H)</SpanCell>
      <SpanCell $col="12" $row="2">距左边线距离</SpanCell>
    </SpanGrid>
  </BottomPanel>
);

const Field = ({ label, value, open, children }) => (
  <FieldRow>
    <FieldLabel>{label}</FieldLabel>
    <SelectBox $open={open}>
      {value}
      <Caret $up={open} />
      {children}
    </SelectBox>
  </FieldRow>
);

const ExportDialog = () => (
  <Dialog>
    <DialogTitle>
      导出
      <SvgBox width="9" height="9" viewBox="0 0 9 9">
        <path d="M.5.500l8 8M8.500.500l-8 8" stroke="#fff" strokeWidth="1.300" />
      </SvgBox>
    </DialogTitle>
    <DialogBody>
      <NameRow>
        <NameLabel>工程名称：</NameLabel>
        <NameInput>钢材大市场2#楼13清单(导出)</NameInput>
      </NameRow>
      <RuleGroup $h={78}>
        <Legend>计算规则</Legend>
        <Field label="清单规则：" value="房屋建筑与装饰工程计量规范计算规则(2013-山东)(R1.0.21.1)" />
        <Field label="定额规则：" value="山东省建筑工程消耗量定额计算规则(2016)(R1.0.21.1)" />
      </RuleGroup>
      <RuleGroup $h={78}>
        <Legend>清单定额库</Legend>
        <Field label="清单库：" value="工程量清单项目计量规范(2013-山东)" />
        <Field label="定额库：" value="山东省建筑工程消耗量定额(2016)" />
      </RuleGroup>
      <RuleGroup $h={78}>
        <Legend>钢筋规则</Legend>
        <Field label="平法规则：" value="16系平法规则" open>
          <DropList>
            <DropItem $on>11系平法规则</DropItem>
            <DropItem>16系平法规则</DropItem>
          </DropList>
        </Field>
        <Field label="汇总方式：" value="" />
      </RuleGroup>
      <CheckRow>
        <BlueCheck>
          <SvgBox width="10" height="8" viewBox="0 0 10 8">
            <path d="M1 4l3 3 5-6" fill="none" stroke="#fff" strokeWidth="1.800" />
          </SvgBox>
        </BlueCheck>
        导出做法
      </CheckRow>
      <Hint>提示：工程保存时会以这里所输入的工程名称做为默认的文件名。</Hint>
      <Rule />
      <ButtonRow>
        <DialogButton $primary>导出</DialogButton>
        <DialogButton>取消</DialogButton>
      </ButtonRow>
    </DialogBody>
  </Dialog>
);

const Arrows = () => (
  <ArrowLayer width="1227" height="807" viewBox="0 0 1227 807">
    <polygon points="18,5 689,261 691,257 702,272 683,273 685,270" fill="#f01ef0" />
    <polygon points="703,272 797,505 801,503 800,523 786,509 790,507" fill="#f01ef0" />
  </ArrowLayer>
);

export default function App() {
  return (
    <>
      <GlobalStyle />
      <Page>
        <MenuBar>
          <Logo>
            <SvgBox width="30" height="20" viewBox="0 0 30 20">
              <path d="M0 0h26v9q0 6-6 6H0z" fill="#1a78d8" />
              <path d="M11 3h3l-1 9h-3z" fill="#cfe6fb" />
              <path d="M25 19h4v-4z" fill="#999" />
            </SvgBox>
          </Logo>
          {menus.map((m) => <MenuTab key={m} $active={m === "建模"}>{m}</MenuTab>)}
        </MenuBar>
        <RibbonArea />
        <SelectorBar>
          <SmallSelect $w={95} $cut>B座<Caret /></SmallSelect>
          <SmallSelect $w={99}>基础层<Caret /></SmallSelect>
          <SmallSelect $w={100}>基础<Caret /></SmallSelect>
          <SmallSelect $w={99}>基础梁<Caret /></SmallSelect>
          <SmallSelect $w={99}>JZL-1<Caret /></SmallSelect>
          <SmallSelect $w={98}>分层1<Caret /></SmallSelect>
        </SelectorBar>
        <Main>
          <LeftPanel />
          <MiddlePanels />
          <RightCol>
            <DrawingCanvas />
            <HSplit />
            <BeamTable />
          </RightCol>
        </Main>
        <Grip />
        <ExportDialog />
        <Arrows />
      </Page>
    </>
  );
}
